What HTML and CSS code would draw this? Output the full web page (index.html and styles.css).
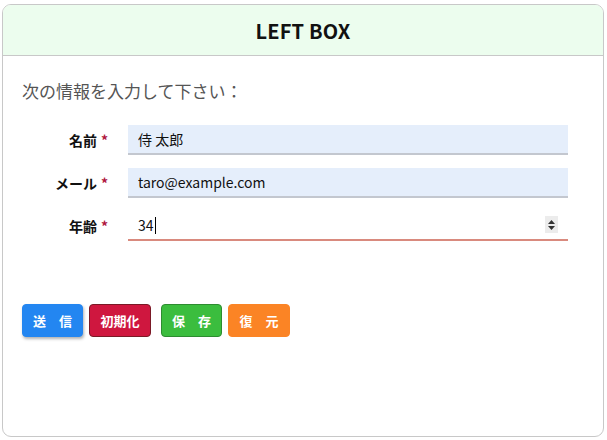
FILE: index.html
```html
<!DOCTYPE html>
<html lang="ja">
<head>
<meta charset="utf-8">
<link rel="stylesheet" href="styles.css">
</head>
<body>
<div class="page">
  <section class="box">
    <header class="box-head">LEFT BOX</header>
    <div class="box-body">
      <p class="lead">次の情報を入力して下さい：</p>
      <div class="form">
        <div class="row">
          <label class="label">名前<span class="req">*</span></label>
          <input class="field" type="text" value="侍 太郎">
        </div>
        <div class="row">
          <label class="label">メール<span class="req">*</span></label>
          <input class="field" type="text" value="taro@example.com">
        </div>
        <div class="row">
          <label class="label">年齢<span class="req">*</span></label>
          <div class="field field-num"><span class="num">34</span><span class="caret"></span>
            <span class="spin"><svg width="9" height="12" viewBox="0 0 9 12"><path d="M4.5 1 L8 5 H1 Z" fill="#333"/><path d="M4.5 11 L8 7 H1 Z" fill="#333"/></svg></span>
          </div>
        </div>
      </div>
      <div class="actions">
        <div class="group">
          <button class="btn btn-blue">送　信</button>
          <button class="btn btn-red">初期化</button>
        </div>
        <div class="group">
          <button class="btn btn-green">保　存</button>
          <button class="btn btn-orange">復　元</button>
        </div>
      </div>
    </div>
  </section>
</div>
</body>
</html>
```
FILE: styles.css
```css
* { box-sizing: border-box; }
html, body { margin: 0; padding: 0; background: #fff; }
body { font-family: "Noto Sans CJK JP", "Noto Sans", sans-serif; color: #222; }
.page { padding: 4px 3px 3px 2px; }
.box {
  width: 602px;
  height: 433px;
  border: 1px solid #c8c8c8;
  border-radius: 9px;
  overflow: hidden;
  display: flex;
  flex-direction: column;
}
.box-head {
  height: 51px;
  background: #ecfdee;
  border-bottom: 1px solid #c8c8c8;
  display: flex;
  align-items: center;
  justify-content: center;
  font-weight: 700;
  font-size: 20px;
  color: #111;
  letter-spacing: 0.2px;
}
.box-body { padding: 22px 35px 0 19px; }
.lead {
  margin: 0;
  font-size: 17px;
  line-height: 26px;
  color: #555;
}
.form {
  margin-top: 21px;
  display: flex;
  flex-direction: column;
  gap: 13px;
}
.row { display: flex; align-items: center; }
.label {
  width: 86px;
  text-align: right;
  font-weight: 700;
  font-size: 14px;
  color: #111;
  margin-right: 20px;
}
.req { color: #b0173f; margin-left: 4px; }
.field {
  flex: 1;
  height: 30px;
  border: 0;
  border-bottom: 2px solid #c3c7cf;
  background: #e5eefb;
  font-family: inherit;
  font-size: 14px;
  color: #111;
  padding: 0 10px;
  outline: none;
}
.field-num {
  background: #fff;
  border-bottom: 2px solid #d98a7e;
  display: flex;
  align-items: center;
  position: relative;
}
.caret { width: 1px; height: 17px; background: #000; margin-left: 1px; }
.spin {
  position: absolute;
  right: 10px;
  top: 5px;
  width: 13px;
  height: 17px;
  background: #ececec;
  display: flex;
  align-items: center;
  justify-content: center;
}
.actions {
  margin-top: 63px;
  display: flex;
  gap: 10px;
}
.group { display: flex; gap: 6px; }
.btn {
  width: 62px;
  height: 33px;
  border-radius: 4px;
  border: 1px solid transparent;
  color: #fff;
  font-family: inherit;
  font-size: 13px;
  font-weight: 700;
  padding: 0;
  cursor: pointer;
}
.btn-blue { background: #2386f1; border-color: #2386f1; box-shadow: 1px 2px 3px rgba(0,0,0,0.3); width: 61px; }
.btn-red { background: #cf173f; border-color: #7a1a26; }
.btn-green { background: #3bbd3e; border-color: #2d8c30; width: 61px; }
.btn-orange { background: #fb8425; border-color: #fb8425; }
```
